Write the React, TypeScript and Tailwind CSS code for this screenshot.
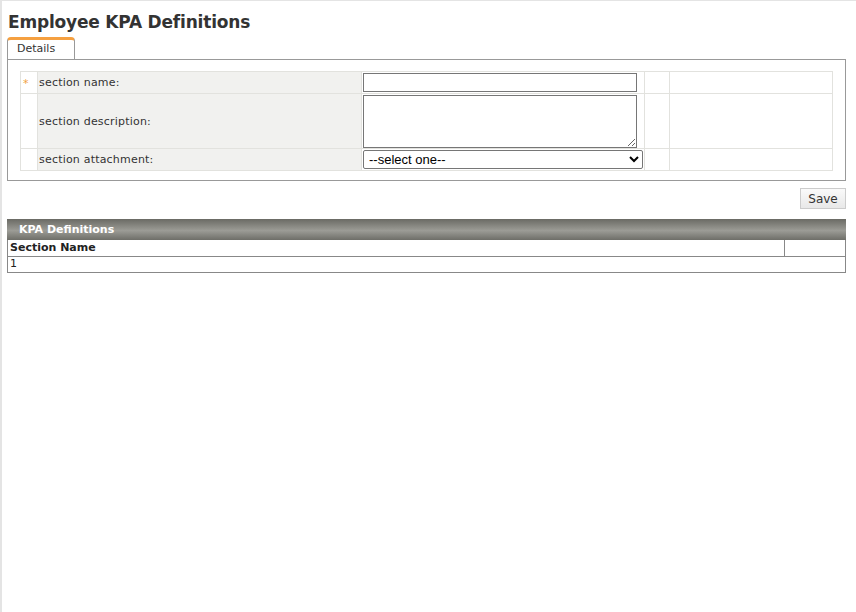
import React from "react";

const verdana = "font-['Verdana','DejaVu_Sans',sans-serif]";

function FormRow({
  label,
  required,
  tall,
  children,
}: {
  label: string;
  required?: boolean;
  tall?: boolean;
  children: React.ReactNode;
}) {
  return (
    <tr className={tall ? "h-[55px]" : "h-[22px]"}>
      <td className="w-[17px] border border-[#e2e2de] text-left align-top pl-[2px] pt-[4px] text-[11px] text-[#f0a040]">
        {required ? "*" : ""}
      </td>
      <td className="w-[324px] border border-[#e2e2de] bg-[#f1f1ef] pl-[1px] pt-[2px] text-[11px] tracking-[0.2px] text-[#333]">
        {label}
      </td>
      <td className="w-[283px] border border-[#e2e2de] px-[1px] py-0">{children}</td>
      <td className="w-[25px] border border-[#e2e2de]"></td>
      <td className="border border-[#e2e2de]"></td>
    </tr>
  );
}

export default function App() {
  return (
    <div className={`w-[856px] h-[612px] bg-white border-t border-l-2 border-[#e4e4e4] ${verdana} text-[#333]`}>
      <div className="pl-[5px] pr-[10px]">
        {/* Titel */}
        <h1 className="pt-[10px] pl-[1px] text-[17px] tracking-[-0.2px] leading-[22px] font-bold text-[#333]">
          Employee KPA Definitions
        </h1>

        {/* Tabs */}
        <div className="mt-[4px] flex">
          <div className="w-[68px] h-[22px] rounded-t-[4px] border border-b-0 border-[#999] border-t-[3px] border-t-[#f5a040] bg-white pl-[9px] text-[11px] leading-[17px] text-[#333]">
            Details
          </div>
        </div>

        <div className="border border-[#999] px-[12px] pt-[11px] pb-[9px]">
          <table className="w-full border-collapse">
            <tbody>
              <FormRow label="section name:" required>
                <input
                  type="text"
                  className="block w-[274px] h-[19px] border border-[#767676] bg-white"
                />
              </FormRow>
              <FormRow label="section description:" tall>
                <textarea className="block w-[274px] h-[53px] border border-[#767676] bg-white resize" />
              </FormRow>
              <FormRow label="section attachment:">
                <select
                  className="block w-[280px] h-[19px] border border-[#767676] rounded-[2px] bg-white text-[13px] font-['Liberation_Sans',Arial,sans-serif] text-black pl-[1px] appearance-auto"
                  defaultValue=""
                >
                  <option value="">--select one--</option>
                </select>
              </FormRow>
            </tbody>
          </table>
        </div>

        <div className="flex justify-end pt-[7px] pb-[10px]">
          <button className="h-[21px] w-[46px] border border-[#ccc] bg-[linear-gradient(#fafafa,#e8e8e8)] text-[12px] text-[#333]">
            Save
          </button>
        </div>

        {/* KPA Definitions */}
        <div className="h-[21px] bg-[linear-gradient(#6a6a64_0%,#8e8e88_40%,#9c9c96_55%,#6e6e68_100%)] pl-[12px] text-[11px] leading-[21px] font-bold text-white">
          KPA Definitions
        </div>
        <table className="w-full border-collapse border border-[#888] border-t-0">
          <tbody>
            <tr className="h-[16px]">
              <td className="border-r border-[#888] pl-[2px] text-[11px] leading-[14px] font-bold text-[#222]">
                Section Name
              </td>
              <td className="w-[61px]"></td>
            </tr>
            <tr className="h-[16px] border-t border-[#888]">
              <td colSpan={2} className="pl-[2px] text-[11px] leading-[14px] text-[#222]">
                1
              </td>
            </tr>
          </tbody>
        </table>
      </div>
    </div>
  );
}
